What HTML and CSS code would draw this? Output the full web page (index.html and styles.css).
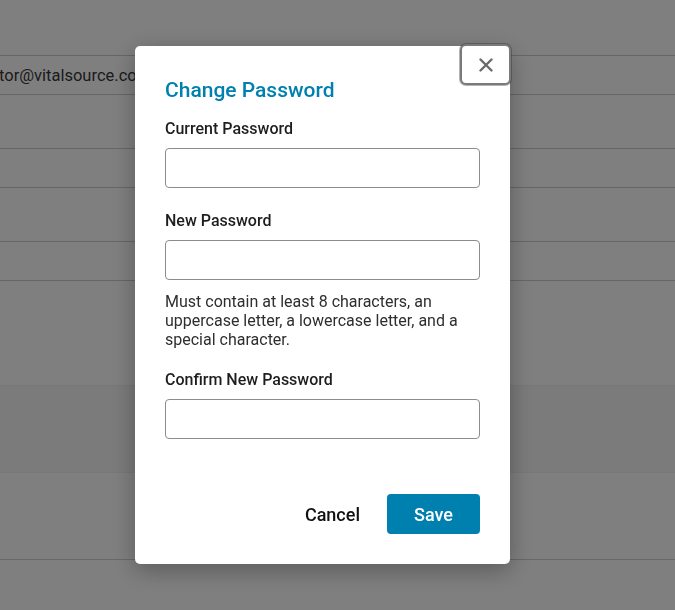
FILE: index.html
```html
<!doctype html>
<html>
    <head>
        <title>Change Password</title>
        <link rel="stylesheet" href="styles.css">
    </head>
    <body>
        <div class="page">
            <div class="row">
                <span class="email">tor@vitalsource.com</span>
            </div>
            <div class="row"></div>
            <div class="row"></div>
            <div class="band"></div>
            <div class="tail"></div>
        </div>

        <div class="overlay">
            <div class="modal">
                <button class="close" aria-label="Close">
                    <svg width="14" height="14" viewBox="0 0 14 14">
                        <path d="M1.5 1.5 L12.5 12.5 M12.5 1.5 L1.5 12.5" stroke="#6b6b6b" stroke-width="2.4" stroke-linecap="round" fill="none" />
                    </svg>
                </button>
                <h2 class="title">Change Password</h2>

                <div class="field">
                    <label>Current Password</label>
                    <input type="password" />
                </div>
                <div class="field">
                    <label>New Password</label>
                    <input type="password" />
                    <p class="hint">Must contain at least 8 characters, an uppercase letter, a lowercase letter, and a special character.</p>
                </div>
                <div class="field">
                    <label>Confirm New Password</label>
                    <input type="password" />
                </div>

                <div class="actions">
                    <button class="btn cancel">Cancel</button>
                    <button class="btn save">Save</button>
                </div>
            </div>
        </div>
    </body>
</html>
```

FILE: styles.css
```css
* {
    box-sizing: border-box;
}
body {
    margin: 0;
    background: #fff;
    font-family: Roboto, "Liberation Sans", sans-serif;
}

.page {
    padding-top: 55px;

    .row {
        height: 40px;
        border-top: 1px solid #cdcdcd;
        border-bottom: 1px solid #cdcdcd;
        margin-bottom: 53px;
        display: flex;
        align-items: center;
    }

    .row:nth-child(3) {
        margin-bottom: 104px;
    }

    .email {
        font-size: 16.5px;
        color: #383838;
        margin-left: -1px;
    }

    .band {
        height: 87px;
        background: #f6f6f6;
        border-top: 1px solid #efefef;
    }

    .tail {
        height: 88px;
        border-top: 1px solid #f0f0f0;
        border-bottom: 1px solid #d0d0d0;
    }
}

.overlay {
    position: fixed;
    inset: 0;
    background: rgba(0, 0, 0, 0.5);
    padding: 46px 0 0 135px;
}

.modal {
    position: relative;
    width: 375px;
    background: #fff;
    border-radius: 5px;
    padding: 32px 30px 30px;
    box-shadow: 0 6px 24px rgba(0, 0, 0, 0.3);

    .close {
        position: absolute;
        top: -2px;
        right: -1px;
        width: 51px;
        height: 41px;
        background: #fff;
        border: 2px solid #7a7a7a;
        border-radius: 6px;
        box-shadow: 0 0 0 1px rgba(40, 40, 40, 0.35);
        display: grid;
        place-items: center;
        padding: 0;
        cursor: pointer;
    }

    .title {
        margin: 0 0 17px;
        font-size: 21px;
        line-height: 24px;
        font-weight: 500;
        color: #0080ae;
    }
}

.field {
    margin-bottom: 23px;

    label {
        display: block;
        font-size: 16px;
        line-height: 20px;
        font-weight: 500;
        color: #1e1e1e;
        margin-bottom: 9px;
    }

    input {
        display: block;
        width: 100%;
        height: 40px;
        border: 1px solid #8c8c8c;
        border-radius: 4px;
        background: #fff;
        font-size: 15px;
        padding: 0 10px;
    }

    .hint {
        margin: 12px 0 -2px;
        font-size: 16px;
        line-height: 19px;
        color: #2e2e2e;
    }
}

.actions {
    display: flex;
    justify-content: flex-end;
    gap: 13px;
    margin-top: 55px;

    .btn {
        height: 40px;
        font-family: Roboto, "Liberation Sans", sans-serif;
        font-size: 18px;
        font-weight: 500;
        border: none;
        border-radius: 4px;
        cursor: pointer;
    }

    .cancel {
        background: none;
        color: #111;
        padding: 0 14px;
    }

    .save {
        width: 93px;
        background: #0080ae;
        color: #fff;
    }
}
```
